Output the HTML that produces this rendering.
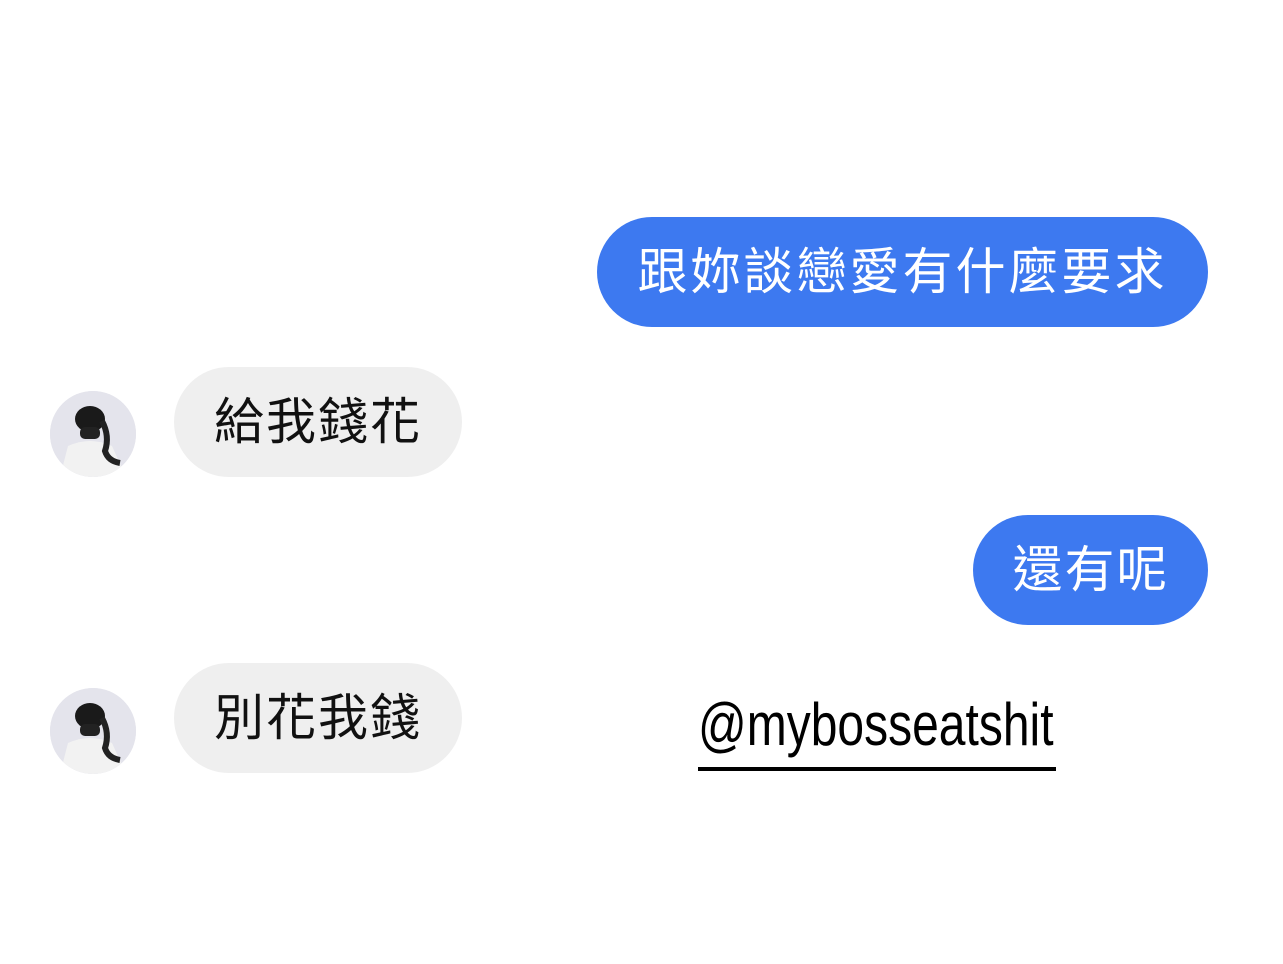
<!DOCTYPE html>
<html><head><meta charset="utf-8"><style>
body{margin:0;width:1283px;height:964px;background:#fff;position:relative;overflow:hidden;font-family:"Liberation Sans","Noto Sans CJK TC",sans-serif}
.b{position:absolute;height:110px;border-radius:55px;font-size:50px;line-height:110px;box-sizing:border-box;white-space:nowrap}
.blue{background:#3d79f0;color:#fff;text-align:center}
.gray{background:#efefef;color:#111;text-align:center}
.av{position:absolute;width:86px;height:86px;border-radius:50%;background:#e6e6ee;overflow:hidden}
.tag{position:absolute;left:698px;top:690px;font-family:"Liberation Sans",sans-serif;font-size:60px;color:#000;transform-origin:left top;transform:scaleX(0.8);white-space:nowrap;line-height:70px}
.ul{position:absolute;left:698px;top:767px;width:358px;height:4px;background:#000}
</style></head><body>
<div class="b blue" style="left:597px;top:217px;width:611px;letter-spacing:3px">跟妳談戀愛有什麼要求</div>
<div class="b gray" style="left:174px;top:367px;width:288px;letter-spacing:2px">給我錢花</div>
<div class="b blue" style="left:973px;top:515px;width:235px;letter-spacing:2px">還有呢</div>
<div class="b gray" style="left:174px;top:663px;width:288px;letter-spacing:2px">別花我錢</div>
<div class="av" style="left:50px;top:391px"><svg width="86" height="86"><rect width="86" height="86" fill="#e4e4ec"/><path d="M10 86 L18 55 Q40 45 62 55 L76 86Z" fill="#f2f2f2"/><ellipse cx="40" cy="28" rx="15" ry="13" fill="#1a1a1a"/><path d="M52 30 Q60 45 55 60 Q58 70 70 72" stroke="#222" stroke-width="6" fill="none"/><rect x="30" y="36" width="20" height="12" rx="5" fill="#222"/></svg></div>
<div class="av" style="left:50px;top:688px"><svg width="86" height="86"><rect width="86" height="86" fill="#e4e4ec"/><path d="M10 86 L18 55 Q40 45 62 55 L76 86Z" fill="#f2f2f2"/><ellipse cx="40" cy="28" rx="15" ry="13" fill="#1a1a1a"/><path d="M52 30 Q60 45 55 60 Q58 70 70 72" stroke="#222" stroke-width="6" fill="none"/><rect x="30" y="36" width="20" height="12" rx="5" fill="#222"/></svg></div>
<div class="tag">@mybosseatshit</div>
<div class="ul"></div>
</body></html>
